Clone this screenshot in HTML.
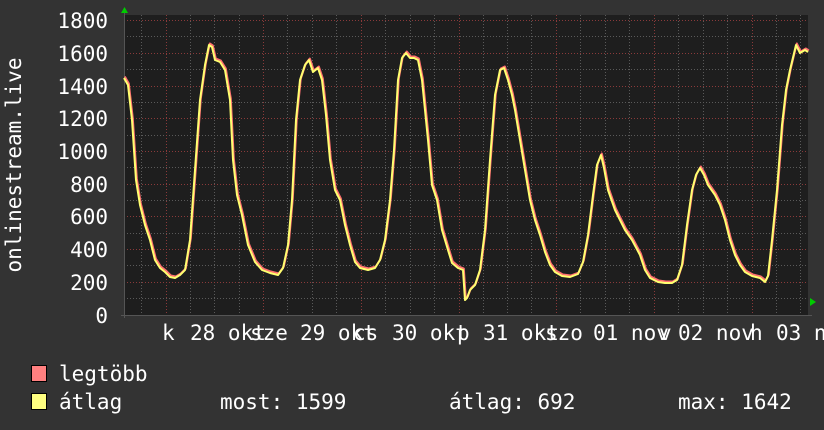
<!DOCTYPE html>
<html><head><meta charset="utf-8"><style>
html,body{margin:0;padding:0;background:#333333;}
svg{display:block;}
text{font-family:"DejaVu Sans Mono","Liberation Mono",monospace;fill:#ffffff;font-size:21px;}
</style></head><body>
<svg width="824" height="430" xmlns="http://www.w3.org/2000/svg">
<rect width="824" height="430" fill="#333333"/>
<rect x="124" y="15" width="684" height="300" fill="#1e1e1e"/>
<g stroke="#5a5a5a" stroke-width="1" stroke-dasharray="1,2">
<line x1="124" y1="298.5" x2="808" y2="298.5"/><line x1="124" y1="265.5" x2="808" y2="265.5"/><line x1="124" y1="233.5" x2="808" y2="233.5"/><line x1="124" y1="200.5" x2="808" y2="200.5"/><line x1="124" y1="167.5" x2="808" y2="167.5"/><line x1="124" y1="135.5" x2="808" y2="135.5"/><line x1="124" y1="102.5" x2="808" y2="102.5"/><line x1="124" y1="69.5" x2="808" y2="69.5"/><line x1="124" y1="36.5" x2="808" y2="36.5"/>
<line x1="141.5" y1="15" x2="141.5" y2="315"/><line x1="190.5" y1="15" x2="190.5" y2="315"/><line x1="214.5" y1="15" x2="214.5" y2="315"/><line x1="239.5" y1="15" x2="239.5" y2="315"/><line x1="287.5" y1="15" x2="287.5" y2="315"/><line x1="312.5" y1="15" x2="312.5" y2="315"/><line x1="336.5" y1="15" x2="336.5" y2="315"/><line x1="385.5" y1="15" x2="385.5" y2="315"/><line x1="410.5" y1="15" x2="410.5" y2="315"/><line x1="434.5" y1="15" x2="434.5" y2="315"/><line x1="483.5" y1="15" x2="483.5" y2="315"/><line x1="507.5" y1="15" x2="507.5" y2="315"/><line x1="531.5" y1="15" x2="531.5" y2="315"/><line x1="580.5" y1="15" x2="580.5" y2="315"/><line x1="605.5" y1="15" x2="605.5" y2="315"/><line x1="629.5" y1="15" x2="629.5" y2="315"/><line x1="678.5" y1="15" x2="678.5" y2="315"/><line x1="703.5" y1="15" x2="703.5" y2="315"/><line x1="727.5" y1="15" x2="727.5" y2="315"/><line x1="776.5" y1="15" x2="776.5" y2="315"/><line x1="800.5" y1="15" x2="800.5" y2="315"/>
</g>
<g stroke="#8a3a3a" stroke-width="1" stroke-dasharray="1,2">
<line x1="124" y1="282.5" x2="808" y2="282.5"/><line x1="124" y1="249.5" x2="808" y2="249.5"/><line x1="124" y1="216.5" x2="808" y2="216.5"/><line x1="124" y1="184.5" x2="808" y2="184.5"/><line x1="124" y1="151.5" x2="808" y2="151.5"/><line x1="124" y1="118.5" x2="808" y2="118.5"/><line x1="124" y1="86.5" x2="808" y2="86.5"/><line x1="124" y1="53.5" x2="808" y2="53.5"/><line x1="124" y1="20.5" x2="808" y2="20.5"/>
<line x1="166.5" y1="15" x2="166.5" y2="318"/><line x1="263.5" y1="15" x2="263.5" y2="318"/><line x1="361.5" y1="15" x2="361.5" y2="318"/><line x1="459.5" y1="15" x2="459.5" y2="318"/><line x1="556.5" y1="15" x2="556.5" y2="318"/><line x1="654.5" y1="15" x2="654.5" y2="318"/><line x1="752.5" y1="15" x2="752.5" y2="318"/>
</g>
<line x1="121" y1="315.5" x2="812" y2="315.5" stroke="#555" stroke-width="1"/>
<line x1="124.5" y1="12" x2="124.5" y2="318" stroke="#555" stroke-width="1"/>
<polygon points="121,13 124.5,7 128,13" fill="#00cc00"/>
<polygon points="810,298 816,302 810,306" fill="#00cc00"/>
<g fill="none" stroke-width="2" stroke-linejoin="round">
<polyline stroke="#ff7070" transform="translate(0.8,-1.5)" points="124,78 128,85 132,120 136,180 140,205 145,225 150,240 155,260 160,268 165,272 170,277 175,278 180,275 185,270 190,240 195,170 200,100 205,65 209,45 212,47 215,60 220,62 225,70 230,100 233,160 237,195 242,215 248,245 255,262 262,270 270,273 278,275 283,268 288,245 292,200 296,120 300,80 305,65 309,60 313,72 318,68 322,80 326,115 330,160 335,190 340,200 345,225 350,245 355,262 360,268 368,270 375,268 380,260 385,240 390,200 394,150 398,80 402,58 406,53 410,58 414,58 418,60 422,80 428,140 432,185 437,200 442,230 448,250 452,263 458,268 463,270 465,300 467,298 470,290 475,285 480,270 485,230 490,160 495,95 500,70 504,68 508,80 512,95 515,110 520,140 525,170 530,200 535,220 540,235 545,252 550,265 555,272 562,276 570,277 578,274 583,262 588,235 593,195 597,165 601,155 604,168 608,190 615,210 620,220 625,230 632,240 640,255 645,270 650,278 658,282 665,283 672,283 677,280 682,265 687,225 692,190 696,175 700,168 704,175 708,185 715,195 720,205 725,220 730,240 735,255 740,265 745,272 752,276 760,278 765,282 768,276 772,240 777,190 782,125 786,90 790,70 796,45 800,53 805,50 808,52"/>
<polyline stroke="#ffff70" points="124,78 128,85 132,120 136,180 140,205 145,225 150,240 155,260 160,268 165,272 170,277 175,278 180,275 185,270 190,240 195,170 200,100 205,65 209,45 212,47 215,60 220,62 225,70 230,100 233,160 237,195 242,215 248,245 255,262 262,270 270,273 278,275 283,268 288,245 292,200 296,120 300,80 305,65 309,60 313,72 318,68 322,80 326,115 330,160 335,190 340,200 345,225 350,245 355,262 360,268 368,270 375,268 380,260 385,240 390,200 394,150 398,80 402,58 406,53 410,58 414,58 418,60 422,80 428,140 432,185 437,200 442,230 448,250 452,263 458,268 463,270 465,300 467,298 470,290 475,285 480,270 485,230 490,160 495,95 500,70 504,68 508,80 512,95 515,110 520,140 525,170 530,200 535,220 540,235 545,252 550,265 555,272 562,276 570,277 578,274 583,262 588,235 593,195 597,165 601,155 604,168 608,190 615,210 620,220 625,230 632,240 640,255 645,270 650,278 658,282 665,283 672,283 677,280 682,265 687,225 692,190 696,175 700,168 704,175 708,185 715,195 720,205 725,220 730,240 735,255 740,265 745,272 752,276 760,278 765,282 768,276 772,240 777,190 782,125 786,90 790,70 796,45 800,53 805,50 808,52"/>
</g>
<g text-anchor="end">
<text x="108" y="28">1800</text><text x="108" y="61">1600</text><text x="108" y="94">1400</text><text x="108" y="126">1200</text><text x="108" y="159">1000</text><text x="108" y="192">800</text><text x="108" y="224">600</text><text x="108" y="257">400</text><text x="108" y="290">200</text><text x="108" y="323">0</text>
</g>
<text transform="translate(21,165) rotate(-90)" text-anchor="middle">onlinestream.live</text>
<g>
<text x="162" y="340">k</text><text x="190" y="340">28 okt</text><text x="250" y="340">sze</text>
<text x="300" y="340">29 okt</text><text x="353" y="340">cs</text>
<text x="392" y="340">30 okt</text><text x="457" y="340">p</text>
<text x="483" y="340">31 okt</text><text x="545" y="340">szo</text>
<text x="593" y="340">01 nov</text><text x="659" y="340">v</text>
<text x="678" y="340">02 nov</text><text x="750" y="340">h</text>
<text x="776" y="340">03 n</text>
</g>
<rect x="31.5" y="365.5" width="15" height="16" fill="#ff8080" stroke="#000"/>
<rect x="31.5" y="393.5" width="15" height="16" fill="#ffff80" stroke="#000"/>
<text x="59" y="381">legtöbb</text>
<text x="59" y="409">átlag</text>
<text x="220" y="409">most: 1599</text>
<text x="449" y="409">átlag: 692</text>
<text x="678" y="409">max: 1642</text>
</svg>
</body></html>
